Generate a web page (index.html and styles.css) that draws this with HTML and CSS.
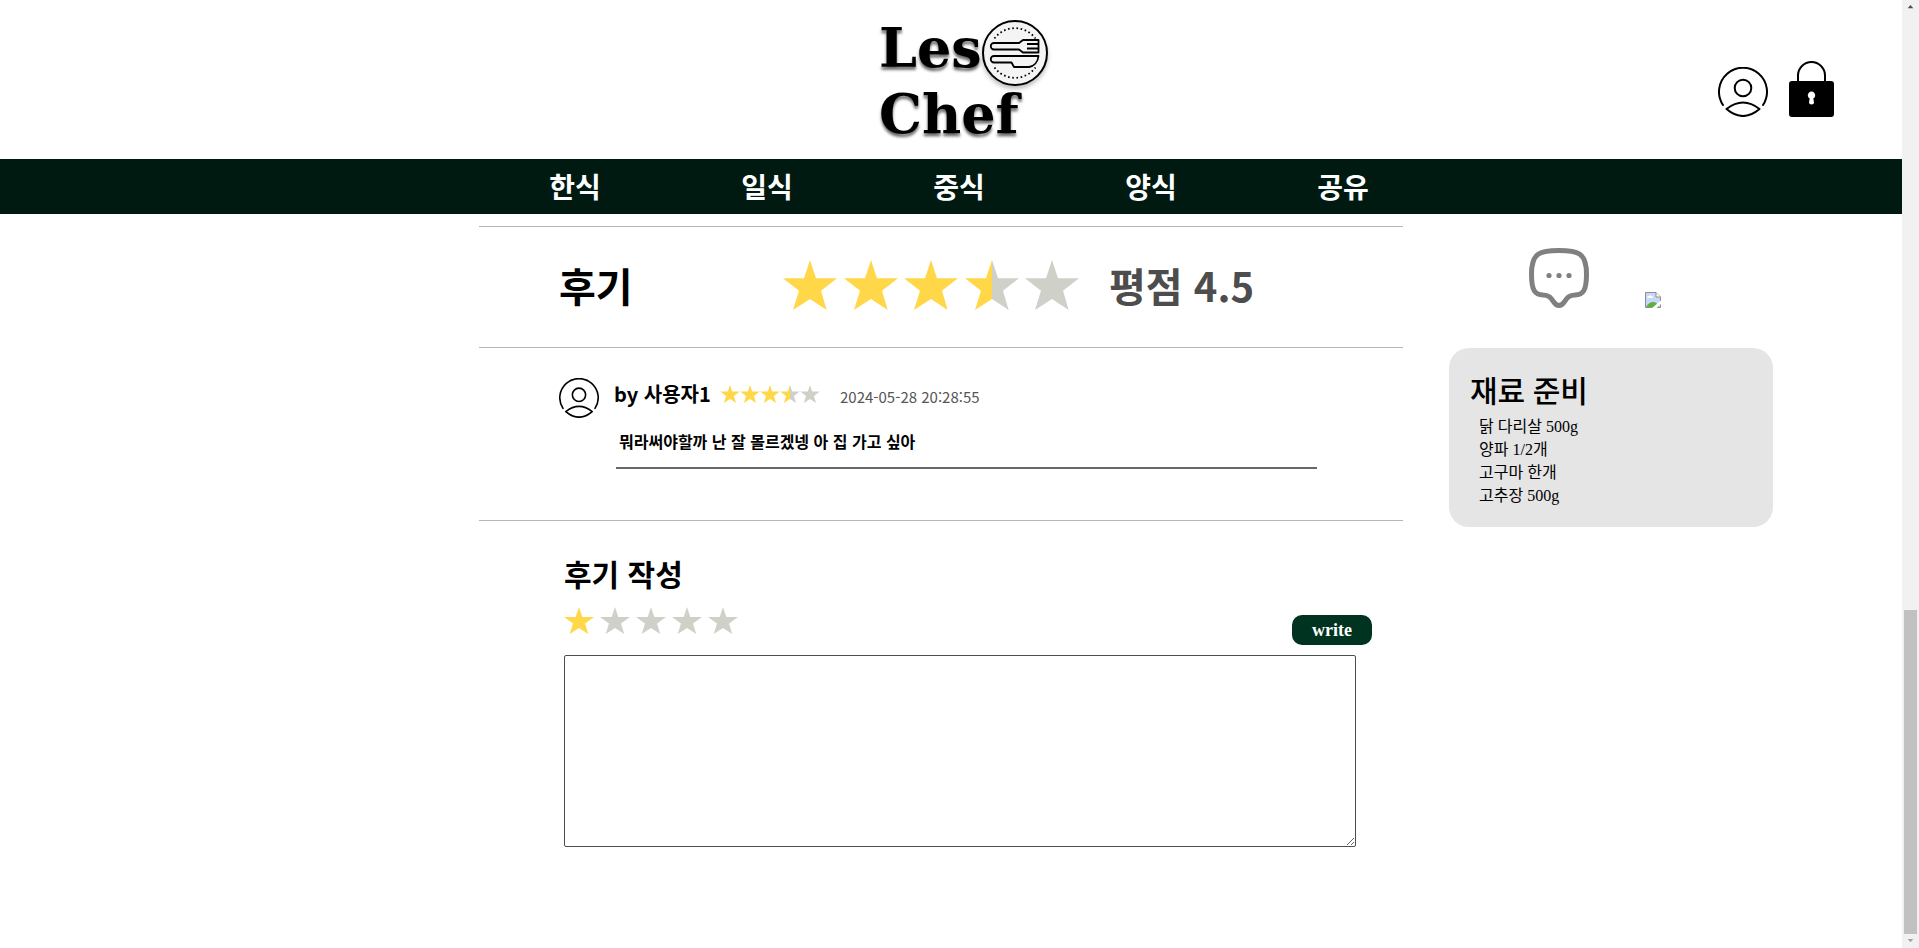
FILE: index.html
```html
<!DOCTYPE html>
<html lang="ko">
<head>
<meta charset="utf-8">
<title>Les Chef</title>
<link rel="stylesheet" href="styles.css">
</head>
<body>
<svg class="defs" aria-hidden="true">
  <symbol id="star" viewBox="0 0 162 150"><path d="M81 0 99 55H162L114 92 131 150 81 117 30 150 48 92 0 55H63Z"/></symbol>
  <symbol id="half" viewBox="0 0 162 150"><path fill="#cfd0c8" d="M81 0 99 55H162L114 92 131 150 81 117Z"/><path fill="#ffd748" d="M81 0V117L30 150 48 92 0 55H63Z"/></symbol>
  <symbol id="user" viewBox="0 0 50 50"><g fill="none" stroke="#000" stroke-width="2" stroke-linecap="round" stroke-linejoin="round"><path d="M5 38A24 24 0 1 1 45 38"/><circle cx="25" cy="21" r="8.3"/><path d="M8.500 42Q25 29 41.500 42Q25 56 8.500 42Z"/></g></symbol>
</svg>
<div class="shell">
  <div class="page">
    <header class="header">
      <a class="logo" href="#">
        <span class="logo-row">Les
          <svg class="logo-mark" viewBox="0 0 66 66" aria-hidden="true">
            <circle cx="33" cy="33" r="32" fill="#f4f4f4" stroke="#000" stroke-width="2"/>
            <g fill="none" stroke="#000" stroke-width="1.800" stroke-linejoin="round">
              <path d="M12.500 18.500A25.500 25.500 0 0 1 53.500 18.500M12.500 47.500A25.500 25.500 0 0 0 53.500 47.500" stroke-dasharray="1.600 2.600"/>
              <path d="M37 23H12a3 3 0 0 0 0 6.500H37L41 32.500H56.500V20H41ZM56 24H45M56 28.500H45"/>
              <path d="M56.500 36H12a3 3 0 0 0 0 6.500H29.500L32 47H47C52 46 56 42 56.500 36Z"/>
            </g>
          </svg>
        </span>
        <span class="logo-row">Chef</span>
      </a>
      <div class="account">
        <a href="#" aria-label="마이페이지"><svg class="user-icon" viewBox="0 0 50 50"><use href="#user"/></svg></a>
        <a href="#" aria-label="로그아웃"><svg class="lock-icon" viewBox="0 0 45 57"><path d="M9 22V15.500A13.500 13.500 0 0 1 36 15.500V22" fill="none" stroke="#000" stroke-width="2"/><rect y="21" width="45" height="36" rx="3"/><path d="M20 42.500 20.700 38.500A3.700 3.700 0 1 1 24.300 38.500L25 42.500Q25 44.500 22.500 44.500T20 42.500Z" fill="#fff"/></svg></a>
      </div>
    </header>
    <nav class="nav">
      <a href="#">한식</a><a href="#">일식</a><a href="#">중식</a><a href="#">양식</a><a href="#">공유</a>
    </nav>
    <div class="content">
      <main class="main">
        <section class="summary">
          <h1>후기</h1>
          <div class="stars stars-large" role="img" aria-label="3.5 / 5">
            <svg class="on"><use href="#star"/></svg><svg class="on"><use href="#star"/></svg><svg class="on"><use href="#star"/></svg><svg><use href="#half"/></svg><svg><use href="#star"/></svg>
          </div>
          <strong class="score">평점 4.5</strong>
        </section>
        <section class="reviews">
          <article class="review">
            <svg class="avatar" viewBox="0 0 50 50" aria-hidden="true"><use href="#user"/></svg>
            <div class="review-body">
              <div class="review-head">
                <span class="author">by 사용자1</span>
                <div class="stars stars-small" role="img" aria-label="3.5 / 5">
                  <svg class="on"><use href="#star"/></svg><svg class="on"><use href="#star"/></svg><svg class="on"><use href="#star"/></svg><svg><use href="#half"/></svg><svg><use href="#star"/></svg>
                </div>
                <time>2024-05-28 20:28:55</time>
              </div>
              <p>뭐라써야할까 난 잘 몰르겠넹 아 집 가고 싶아</p>
            </div>
          </article>
        </section>
        <form class="write">
          <h2 id="write-title">후기 작성</h2>
          <div class="write-bar">
            <div class="picker" role="radiogroup" aria-label="별점">
              <input type="radio" name="score" aria-label="1점" checked>
              <input type="radio" name="score" aria-label="2점">
              <input type="radio" name="score" aria-label="3점">
              <input type="radio" name="score" aria-label="4점">
              <input type="radio" name="score" aria-label="5점">
            </div>
            <button type="button">write</button>
          </div>
          <textarea aria-labelledby="write-title"></textarea>
        </form>
      </main>
      <aside class="side">
        <div class="actions">
          <a href="#" aria-label="댓글"><svg class="chat" viewBox="0 0 60 60"><path d="M30 2.500C48 2.500 57.500 4 57.500 26C57.500 43 54 46.500 46 47C35 47 37 57.500 30 57.500S25 47 14 47C6 46.500 2.500 43 2.500 26C2.500 4 12 2.500 30 2.500Z" fill="none" stroke="#808080" stroke-width="5"/><g fill="#808080"><circle cx="20" cy="27.500" r="2.600"/><circle cx="30" cy="27.500" r="2.600"/><circle cx="40" cy="27.500" r="2.600"/></g></svg></a>
          <svg class="broken" viewBox="0 0 16 16" aria-hidden="true"><path d="M.5.500H11L15.500 5V15.500H.5Z" fill="#c6d7f8" stroke="#8f8f8f"/><path d="M11 .5V5H15.500" fill="#fff" stroke="#8f8f8f"/><path d="M2 6Q2 4 4 4Q5 2.500 6.500 4Q8 4 8 6Z" fill="#fff"/><path d="M1 15Q4 10 8 10T14 15Z" fill="#5cb03c"/><path d="M6.500 16.500 16.500 8V11.500L11 16.500Z" fill="#fff"/></svg>
        </div>
        <section class="ingredients">
          <h2>재료 준비</h2>
          <ul>
            <li>닭 다리살 500g</li>
            <li>양파 1/2개</li>
            <li>고구마 한개</li>
            <li>고추장 500g</li>
          </ul>
        </section>
      </aside>
    </div>
  </div>
  <div class="scrollbar" aria-hidden="true">
    <svg viewBox="0 0 17 17"><path d="M5 10 8.500 6 12 10Z" fill="#505050"/></svg>
    <div class="thumb"></div>
    <svg viewBox="0 0 17 17"><path d="M5 6H12L8.500 10Z" fill="#a3a3a3"/></svg>
  </div>
</div>
</body>
</html>
```
FILE: styles.css
```css
* { box-sizing: border-box; }
body { margin: 0; background: #fff; color: #000; font-family: "Noto Sans CJK KR", sans-serif; }
h1, h2, p, ul { margin: 0; padding: 0; }
svg { display: block; }
a { color: inherit; text-decoration: none; }
.defs { display: none; }

.shell { display: flex; min-height: 100vh; }
.page { flex: 1; min-width: 0; }

.header { display: grid; grid-template-columns: 1fr auto 1fr; height: 159px; padding: 15px 68px 0 92px; }
.logo { grid-column: 2; width: 168px; font: bold 54px/66px "DejaVu Serif", serif; text-shadow: 0 3px 3px rgba(0, 0, 0, .6); }
.logo-row { display: flex; justify-content: space-between; height: 66px; }
.logo-mark { flex: none; width: 66px; height: 66px; margin-top: 5px; filter: drop-shadow(0 3px 2px rgba(0, 0, 0, .25)); }
.account { display: flex; justify-content: flex-end; align-items: flex-end; gap: 21px; height: 102px; }
.user-icon { width: 50px; height: 50px; }
.lock-icon { width: 45px; height: 57px; }

.nav { display: grid; grid-template-columns: repeat(5, 192px); justify-content: center; height: 55px; padding: 2px 0 0 16px; background: #001a11; color: #fff; font: bold 28px/55px "Liberation Serif", "Noto Sans CJK KR", serif; text-align: center; }

.content { display: grid; grid-template-columns: 479fr 924fr 46fr 324fr 129fr; padding-top: 12px; }
.main { grid-column: 2; }
.side { grid-column: 4; }

.summary { display: flex; align-items: center; height: 121px; padding: 0 0 4px 80px; border-top: 1px solid #b4b8b4; }
.summary h1, .score { font-size: 40px; line-height: 56px; font-weight: bold; }
.summary h1 { width: 224px; }
.score { margin-left: 30px; color: #4d4d4d; }
.stars { display: flex; justify-content: space-between; fill: #cfd0c8; }
.stars .on { fill: #ffd748; }
.stars-large { width: 296px; }
.stars-large svg { width: 54px; height: 50px; }
.stars-small { width: 100px; }
.stars-small svg { width: 20px; height: 18px; }

.reviews { height: 173px; padding: 30px 86px 0 80px; border-top: 1px solid #b4b8b4; }
.review { display: flex; gap: 15px; }
.avatar { width: 40px; height: 40px; }
.review-body { flex: 1; }
.review-head { display: flex; align-items: center; height: 31px; }
.author { width: 106px; font-size: 20px; line-height: 30px; font-weight: bold; white-space: nowrap; }
.review time { margin-left: 20px; padding-top: 6px; color: #555; font-size: 15px; line-height: 24px; }
.review p { height: 60px; margin-left: 2px; padding: 20px 0 0 3px; border-bottom: 2px solid #666a66; font-size: 16px; line-height: 24px; font-weight: bold; }

.write { padding: 28px 47px 0 85px; border-top: 1px solid #b4b8b4; }
.write h2 { margin-bottom: 2px; font-size: 30px; line-height: 48px; }
.write-bar { display: flex; justify-content: space-between; align-items: flex-start; height: 56px; margin-right: -16px; padding-top: 8px; }
.picker { display: flex; gap: 6px; }
.picker input { appearance: none; width: 30px; height: 27px; margin: 0; background: #cfd0c8; clip-path: polygon(50% 0, 61% 37%, 100% 37%, 70% 61%, 81% 100%, 50% 78%, 19% 100%, 30% 61%, 0 37%, 39% 37%); }
.picker input:checked { background: #ffd748; }
.write button { width: 80px; height: 30px; margin-top: 8px; padding: 0; border: 0; border-radius: 10px; background: #003320; color: #fff; font: bold 18px/30px "Liberation Serif", serif; }
.write textarea { display: block; width: 100%; height: 192px; border: 1px solid #4d4d4d; border-radius: 2px; background: #fff; resize: both; }

.actions { display: flex; align-items: flex-end; gap: 56px; height: 122px; padding: 0 0 40px 80px; }
.chat { width: 60px; height: 60px; }
.broken { width: 16px; height: 16px; }
.ingredients { padding: 20px 20px 20px 21px; border-radius: 20px; background: #e5e5e5; }
.ingredients h2 { font: 500 30px/47px "Liberation Serif", "Noto Sans CJK KR", serif; }
.ingredients ul { padding-left: 9px; list-style: none; font: 16px/23px "Liberation Serif", "Noto Sans CJK KR", serif; }

.scrollbar { display: flex; flex-direction: column; align-items: center; width: 17px; height: 100vh; background: #f1f1f1; }
.scrollbar svg { width: 17px; height: 14px; }
.thumb { width: 13px; height: 324px; margin-top: auto; background: #c1c1c1; }
```
